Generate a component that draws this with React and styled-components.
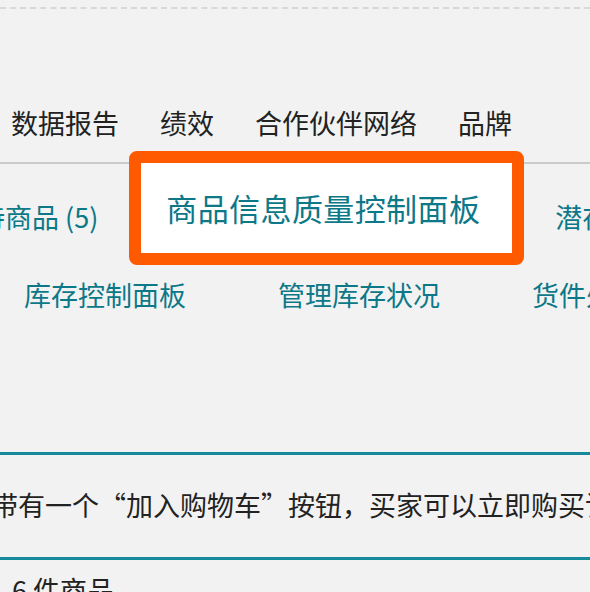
import { Fragment } from "react";
import styled, { createGlobalStyle } from "styled-components";

const GlobalStyle = createGlobalStyle`
  html, body {
    margin: 0;
    padding: 0;
    background: #f2f2f2;
    overflow: hidden;
  }
  body {
    font-family: "Noto Sans CJK SC", "Noto Sans", sans-serif;
  }
`;

const colors = {
  page: "#f2f2f2",
  text: "#222222",
  teal: "#0c7888",
  rule: "#168a9b",
  line: "#cbcbcb",
  orange: "#ff5a00",
};

const Page = styled.div`
  width: 590px;
  height: 592px;
  overflow: hidden;
  background: ${colors.page};
  white-space: nowrap;
`;

const DashedRule = styled.div`
  margin-top: 7px;
  border-top: 2px dashed #d8d8d8;
`;

const NavBar = styled.nav`
  display: flex;
  align-items: center;
  gap: 41px;
  padding: 96px 0 21px 11px;
  border-bottom: 2px solid ${colors.line};
`;

const NavItem = styled.span`
  font-size: 27px;
  line-height: 36px;
  color: ${colors.text};
`;

const TabRow = styled.div`
  display: flex;
  align-items: flex-start;
  gap: 31px;
  margin-left: -22px;
  height: 101px;
`;

const Tab = styled.span`
  padding-top: 35px;
  font-size: 27px;
  line-height: 36px;
  color: ${colors.teal};
`;

// the selected tab, outlined by the thick orange annotation frame
const ActiveTab = styled.div`
  display: flex;
  align-items: center;
  flex-shrink: 0;
  box-sizing: border-box;
  width: 395px;
  height: 114px;
  margin-top: -13px;
  padding-left: 25px;
  border: 12px solid ${colors.orange};
  border-radius: 8px;
  background: #ffffff;
  font-size: 31px;
  line-height: 40px;
  letter-spacing: 0.4px;
  color: ${colors.teal};
`;

const SubNav = styled.div`
  display: flex;
  align-items: center;
  gap: 46px;
  margin-top: 12px;
  padding-left: 24px;
`;

const SubItem = styled.span`
  font-size: 27px;
  line-height: 36px;
  color: ${colors.teal};
`;

const Divider = styled.span`
  width: 2px;
  height: 24px;
  background: #d4d4d4;
`;

const Notice = styled.div`
  margin-top: 139px;
  padding: 32px 0 34px;
  margin-left: -9px;
  border-top: 3px solid ${colors.rule};
  border-bottom: 3px solid ${colors.rule};
  font-size: 27px;
  line-height: 36px;
  color: ${colors.text};
`;

const Count = styled.div`
  margin-top: 12px;
  padding-left: 12px;
  font-size: 27px;
  line-height: 36px;
  color: ${colors.text};
`;

const navItems = ["数据报告", "绩效", "合作伙伴网络", "品牌"];
const subItems = ["库存控制面板", "管理库存状况", "货件处理进度"];

export default function App() {
  return (
    <Page>
      <GlobalStyle />
      <DashedRule />
      <NavBar>
        {navItems.map((item) => (
          <NavItem key={item}>{item}</NavItem>
        ))}
      </NavBar>
      <TabRow>
        <Tab>待商品 (5)</Tab>
        <ActiveTab>商品信息质量控制面板</ActiveTab>
        <Tab>潜在问题商品</Tab>
      </TabRow>
      <SubNav>
        {subItems.map((item, i) => (
          <Fragment key={item}>
            {i > 0 && <Divider />}
            <SubItem>{item}</SubItem>
          </Fragment>
        ))}
      </SubNav>
      <Notice>
        带有一个“加入购物车”按钮，买家可以立即购买该商品
      </Notice>
      <Count>6 件商品</Count>
    </Page>
  );
}
